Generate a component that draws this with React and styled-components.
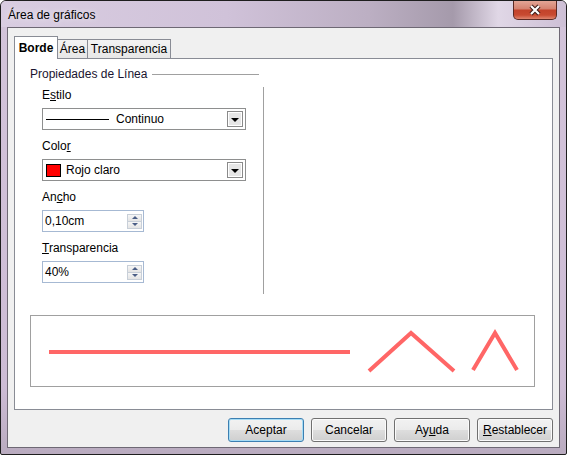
import React from "react";
import styled, { createGlobalStyle } from "styled-components";

const GlobalStyle = createGlobalStyle`
  html, body { margin: 0; padding: 0; background: #fff; }
  body {
    font-family: "Liberation Sans", Arial, sans-serif;
    font-size: 12px;
    color: #000;
  }
`;

const Window = styled.div`
  width: 567px;
  height: 455px;
  box-sizing: border-box;
  border: 1px solid #1e1e1e;
  border-radius: 6px 6px 2px 2px;
  background: linear-gradient(180deg, #d3c4da 0%, #cdbcd5 85%, #b9abbf 100%);
  padding: 0 6px 6px 6px;
  display: flex;
  flex-direction: column;
  overflow: hidden;
`;

const TitleBar = styled.div`
  height: 26px;
  margin: 0 -6px;
  padding: 0 9px 0 7px;
  display: flex;
  align-items: flex-start;
  background: linear-gradient(90deg, #d9cde1 0%, #d0c2d9 40%, #bcafc3 65%, #a59aab 80%, #e0d7e6 88%, #cdbfd5 100%);
`;

const Title = styled.div`
  padding-top: 7px;
  font-size: 12px;
  color: #000;
  text-shadow: 0 0 6px rgba(255, 255, 255, 0.8);
`;

const CloseButton = styled.div`
  margin-left: auto;
  width: 44px;
  height: 19px;
  box-sizing: border-box;
  border: 1px solid #5b2a24;
  border-top: none;
  border-radius: 0 0 5px 5px;
  background: linear-gradient(180deg, #e3a596 0%, #d58371 42%, #c3432b 52%, #c84a31 78%, #e0866f 100%);
  display: flex;
  align-items: center;
  justify-content: center;
`;

const Client = styled.div`
  flex: 1;
  border: 1px solid #6e6874;
  background: #f0f0f0;
  padding: 8px 6px 5px 6px;
  display: flex;
  flex-direction: column;
`;

const TabRow = styled.div`
  display: flex;
  align-items: flex-end;
  height: 22px;
  position: relative;
  z-index: 1;
`;

const Tab = styled.div`
  box-sizing: border-box;
  width: ${(p) => p.$w}px;
  height: ${(p) => (p.$active ? 23 : 19)}px;
  line-height: ${(p) => (p.$active ? 22 : 18)}px;
  margin-bottom: ${(p) => (p.$active ? -1 : 0)}px;
  margin-left: ${(p) => (p.$first ? 0 : -1)}px;
  border: 1px solid #898c95;
  border-bottom: none;
  text-align: center;
  font-weight: ${(p) => (p.$active ? "bold" : "normal")};
  background: ${(p) => (p.$active ? "#fff" : "linear-gradient(180deg, #f3f3f3, #e7e7e7)")};
  position: relative;
  z-index: ${(p) => (p.$active ? 2 : 1)};
`;

const Panel = styled.div`
  flex: 1;
  background: #fff;
  border: 1px solid #898c95;
  padding: 7px 16px 0 15px;
  display: flex;
  flex-direction: column;
`;

const Group = styled.div`
  width: 234px;
`;

const GroupHeader = styled.div`
  display: flex;
  align-items: center;
  height: 16px;
  gap: 5px;
  padding-right: 5px;
  color: #1a1430;
  &::after {
    content: "";
    flex: 1;
    height: 1px;
    background: #a0a0a0;
  }
`;

const GroupBody = styled.div`
  margin-top: 5px;
  padding: 0 0 11px 12px;
  border-right: 1px solid #a0a0a0;
  display: flex;
  flex-direction: column;
  align-items: flex-start;
`;

const Label = styled.div`
  height: 16px;
  line-height: 16px;
  margin-bottom: 5px;
`;

const U = styled.span`
  text-decoration: underline;
`;

const Combo = styled.div`
  box-sizing: border-box;
  width: 204px;
  height: 22px;
  border: 1px solid #8e8f8f;
  background: #fff;
  display: flex;
  align-items: center;
  padding-left: 3px;
  margin-bottom: 8px;
`;

const LineSample = styled.div`
  width: 63px;
  height: 1px;
  background: #000;
  margin-right: 7px;
`;

const Swatch = styled.div`
  box-sizing: border-box;
  width: 15px;
  height: 13px;
  border: 1px solid #000;
  background: ${(p) => p.$color};
  margin-right: 5px;
`;

const DropButton = styled.div`
  margin-left: auto;
  margin-right: 2px;
  box-sizing: border-box;
  width: 16px;
  height: 16px;
  border: 1px solid #8a8a8a;
  box-shadow: inset 0 0 0 1px #fff;
  background: #e6e6e6;
  display: flex;
  align-items: center;
  justify-content: center;
  &::after {
    content: "";
    border-left: 4px solid transparent;
    border-right: 4px solid transparent;
    border-top: 4px solid #000;
    margin-top: 1px;
  }
`;

const Spin = styled.div`
  box-sizing: border-box;
  width: 102px;
  height: 22px;
  border: 1px solid #a6b9d3;
  background: #fff;
  display: flex;
  align-items: center;
  padding-left: 2px;
  margin-bottom: ${(p) => (p.$last ? 0 : 8)}px;
`;

const SpinButtons = styled.div`
  margin-left: auto;
  margin-right: 1px;
  width: 15px;
  display: flex;
  flex-direction: column;
`;

const SpinHalf = styled.div`
  box-sizing: border-box;
  height: 8px;
  border: 1px solid #c8cfd8;
  margin-top: ${(p) => (p.$down ? "-1px" : "0")};
  background: linear-gradient(180deg, #f6f6f6, #e4e4e4);
  display: flex;
  align-items: center;
  justify-content: center;
  &::after {
    content: "";
    border-left: 3px solid transparent;
    border-right: 3px solid transparent;
    ${(p) => (p.$down ? "border-top: 3px solid #4b5e86;" : "border-bottom: 3px solid #4b5e86;")}
  }
`;

const Preview = styled.div`
  margin-top: 21px;
  box-sizing: border-box;
  width: 505px;
  height: 72px;
  border: 1px solid #a0a0a0;
  background: #fff;
  display: flex;
`;

const ButtonRow = styled.div`
  margin-top: 8px;
  display: flex;
  justify-content: flex-end;
  gap: 7px;
`;

const Button = styled.div`
  box-sizing: border-box;
  width: 76px;
  height: 24px;
  line-height: 22px;
  text-align: center;
  border: 1px solid ${(p) => (p.$default ? "#3c7fb1" : "#707070")};
  border-radius: 3px;
  background: linear-gradient(180deg, #f2f2f2 0%, #ebebeb 48%, #dddddd 52%, #cfcfcf 100%);
  box-shadow: inset 0 0 0 1px ${(p) => (p.$default ? "#a6dcf5" : "#fbfbfb")};
`;

function SpinField({ value, last }) {
  return (
    <Spin $last={last}>
      {value}
      <SpinButtons>
        <SpinHalf />
        <SpinHalf $down />
      </SpinButtons>
    </Spin>
  );
}

export default function App() {
  return (
    <>
      <GlobalStyle />
      <Window>
        <TitleBar>
          <Title>Área de gráficos</Title>
          <CloseButton>
            <svg width="14" height="12" viewBox="0 0 14 12">
              <path d="M3 2 L11 10 M11 2 L3 10" stroke="#3a1a16" strokeWidth="4.2" />
              <path d="M3 2 L11 10 M11 2 L3 10" stroke="#fff" strokeWidth="2.2" />
            </svg>
          </CloseButton>
        </TitleBar>
        <Client>
          <TabRow>
            <Tab $w={44} $active $first>Borde</Tab>
            <Tab $w={31}>Área</Tab>
            <Tab $w={84}>Transparencia</Tab>
          </TabRow>
          <Panel>
            <Group>
              <GroupHeader>Propiedades de Línea</GroupHeader>
              <GroupBody>
                <Label>E<U>s</U>tilo</Label>
                <Combo>
                  <LineSample />
                  Continuo
                  <DropButton />
                </Combo>
                <Label>Colo<U>r</U></Label>
                <Combo>
                  <Swatch $color="#ff0000" />
                  Rojo claro
                  <DropButton />
                </Combo>
                <Label>An<U>c</U>ho</Label>
                <SpinField value="0,10cm" />
                <Label><U>T</U>ransparencia</Label>
                <SpinField value="40%" last />
              </GroupBody>
            </Group>
            <Preview>
              <svg width="503" height="70" viewBox="0 0 503 70">
                <g stroke="#ff6666" strokeWidth="4" fill="none" strokeLinejoin="miter">
                  <line x1="18" y1="36" x2="319" y2="36" />
                  <polyline points="338,55 380,17 423,55" />
                  <polyline points="442,54 464,17 486,54" />
                </g>
              </svg>
            </Preview>
          </Panel>
          <ButtonRow>
            <Button $default>Aceptar</Button>
            <Button>Cancelar</Button>
            <Button>Ay<U>u</U>da</Button>
            <Button><U>R</U>establecer</Button>
          </ButtonRow>
        </Client>
      </Window>
    </>
  );
}
